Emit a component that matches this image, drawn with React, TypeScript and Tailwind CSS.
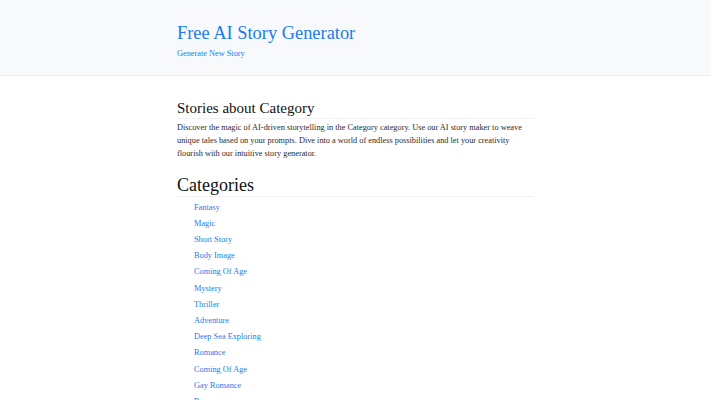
import React from 'react';

const categories = [
  'Fantasy',
  'Magic',
  'Short Story',
  'Body Image',
  'Coming Of Age',
  'Mystery',
  'Thriller',
  'Adventure',
  'Deep Sea Exploring',
  'Romance',
  'Coming Of Age',
  'Gay Romance',
  'Romance',
  'Science Fiction',
  'Horror',
];

const App: React.FC = () => {
  return (
    <div className="min-h-screen bg-white text-[#212529]" style={{ fontFamily: '"Liberation Serif", "Times New Roman", serif' }}>
      {/* Header */}
      <header className="bg-[#f8f9fa] border-b border-[#e9ecef] h-[76px]">
        <div className="max-w-[357px] mx-auto pt-[21px]">
          <h1 className="text-[18.4px] leading-[24px] text-[#1a7cf0] font-normal">
            <a href="#">Free AI Story Generator</a>
          </h1>
          <a href="#" className="block mt-[2px] text-[8.3px] leading-[13px] text-[#1a7cf0]">
            Generate New Story
          </a>
        </div>
      </header>

      <main className="max-w-[357px] mx-auto">
        <h2 className="mt-[23px] text-[15px] leading-[18px] text-[#111] border-b border-[#f1f1f1] pb-px">
          Stories about Category
        </h2>
        <p className="mt-[2px] text-[8.3px] leading-[13px] text-[#2b2b2b]">
          Discover the magic of AI-driven storytelling in the Category category. Use our AI story maker to weave
          unique tales based on your prompts. Dive into a world of endless possibilities and let your creativity
          flourish with our intuitive story generator.
        </p>

        <h2 className="mt-[15px] text-[18px] leading-[20px] text-[#111] border-b border-[#f1f1f1] pb-px">
          Categories
        </h2>
        <ul className="mt-[2.5px] pl-[17px]">
          {categories.map((c, i) => (
            <li key={i} className="text-[8.3px] leading-[16.2px]">
              <a href="#" className="text-[#1a7cf0]">{c}</a>
            </li>
          ))}
        </ul>
      </main>
    </div>
  );
};

export default App;
